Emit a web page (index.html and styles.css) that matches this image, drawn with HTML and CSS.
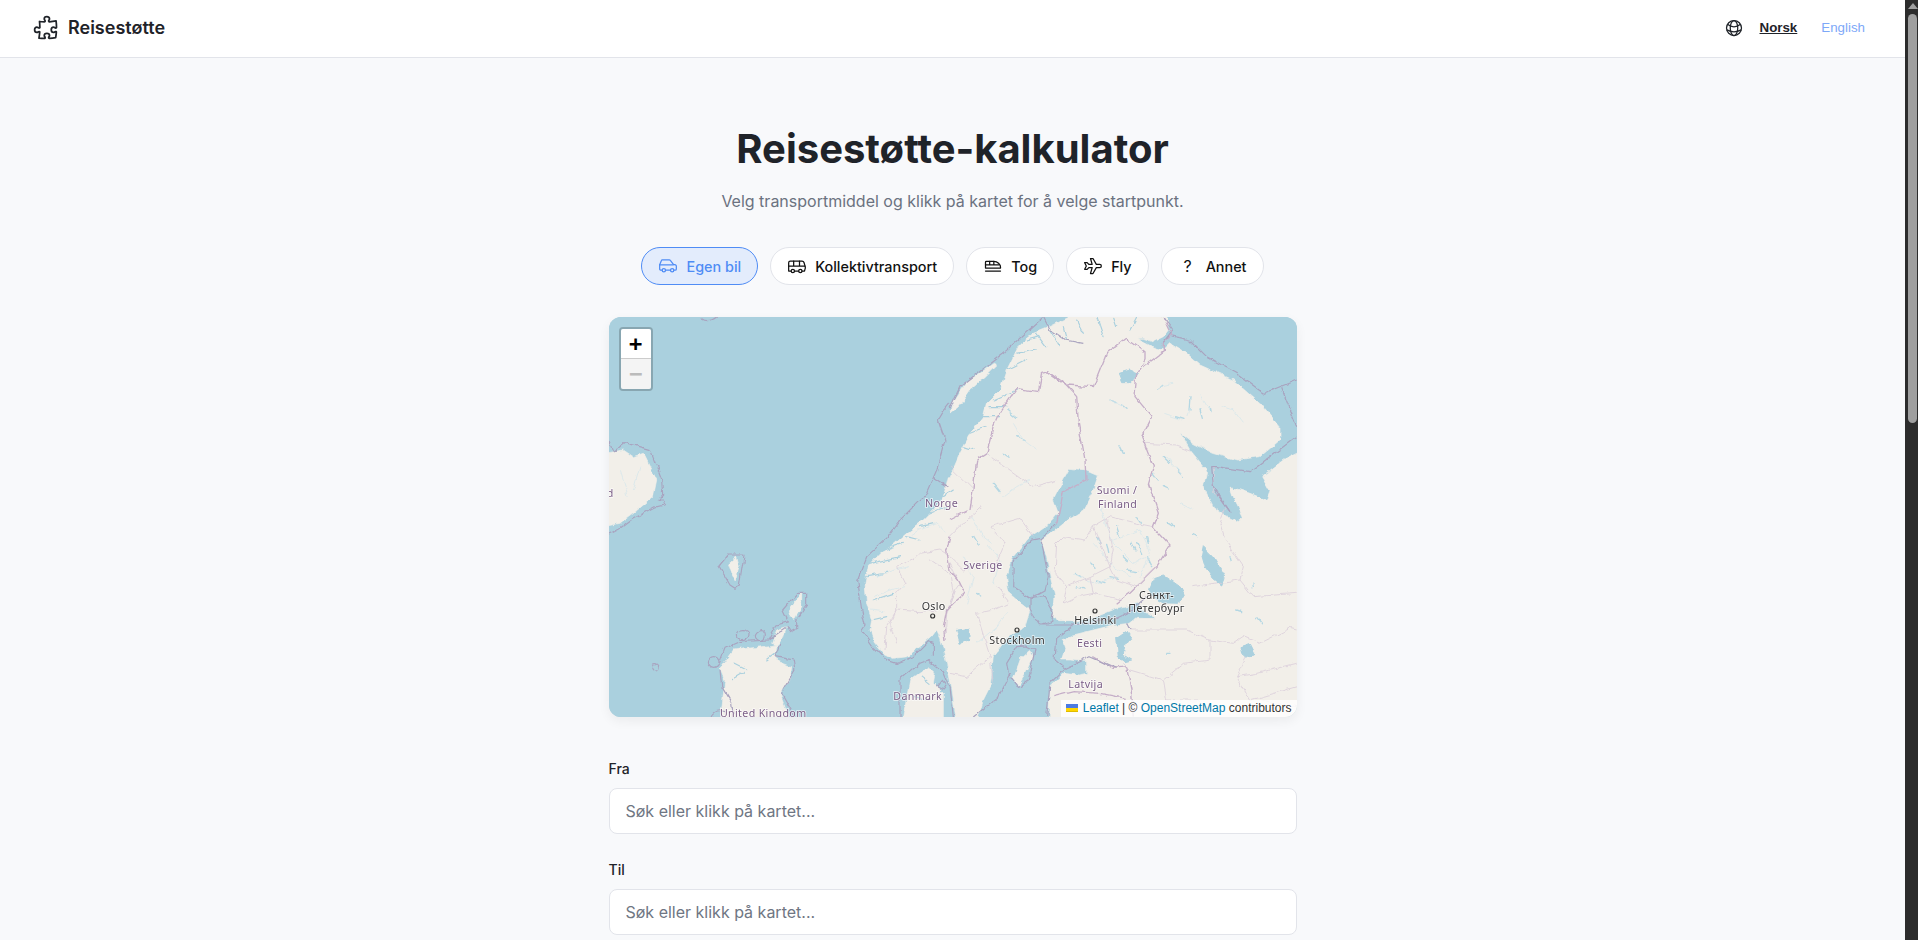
FILE: index.html
```html
<!DOCTYPE html>
<html lang="no">

<head>
    <meta charset="UTF-8">
    <title>Reisestøtte-kalkulator</title>

    <link rel="stylesheet" href="styles.css">
</head>

<body>
    <div class="window">
        <div class="page">
            <header class="topbar">
                <a class="brand" href="#">
                    <svg class="brand-icon" viewBox="0 0 24 24">
                        <path d="M14.25 6.087c0-.355.186-.676.401-.959.221-.29.349-.634.349-1.003 0-1.036-1.007-1.875-2.25-1.875s-2.25.84-2.25 1.875c0 .369.128.713.349 1.003.215.283.401.604.401.959v0a.64.64 0 01-.657.643 48.39 48.39 0 01-4.163-.3c.186 1.613.293 3.25.315 4.907a.656.656 0 01-.658.663v0c-.355 0-.676-.186-.959-.401a1.647 1.647 0 00-1.003-.349c-1.036 0-1.875 1.007-1.875 2.25s.84 2.25 1.875 2.25c.369 0 .713-.128 1.003-.349.283-.215.604-.401.959-.401v0c.31 0 .555.26.532.57a48.039 48.039 0 01-.642 5.056c1.518.19 3.058.309 4.616.354a.64.64 0 00.657-.643v0c0-.355-.186-.676-.401-.959a1.647 1.647 0 01-.349-1.003c0-1.035 1.008-1.875 2.25-1.875 1.243 0 2.25.84 2.25 1.875 0 .369-.128.713-.349 1.003-.215.283-.4.604-.4.959v0c0 .333.277.599.61.58a48.1 48.1 0 005.427-.63 48.05 48.05 0 00.582-4.717.532.532 0 00-.533-.57v0c-.355 0-.676.186-.959.401-.29.221-.634.349-1.003.349-1.035 0-1.875-1.007-1.875-2.25s.84-2.25 1.875-2.25c.37 0 .713.128 1.003.349.283.215.604.401.96.401v0a.656.656 0 00.658-.663 48.422 48.422 0 00-.37-5.36c-1.886.342-3.81.574-5.766.689a.578.578 0 01-.61-.58v0z" />
                    </svg>
                    <span>Reisestøtte</span>
                </a>
                <nav class="lang">
                    <svg class="lang-icon" viewBox="0 0 24 24">
                        <circle cx="12" cy="12" r="9" />
                        <ellipse cx="12" cy="12" rx="4.5" ry="9" />
                        <path d="M4.2 7.6c2.2 1.8 4.9 2.9 7.8 2.9s5.600-1.100 7.800-2.900M3.300 14.300c2.600 1.400 5.600 2.200 8.700 2.200s6.100-.8 8.700-2.200" />
                    </svg>
                    <button class="lang-btn lang-btn-active">Norsk</button>
                    <button class="lang-btn">English</button>
                </nav>
            </header>

            <main class="content">
                <h1>Reisestøtte-kalkulator</h1>
                <p class="lead">Velg transportmiddel og klikk på kartet for å velge startpunkt.</p>

                <div class="modes">
                    <button class="mode mode-active">
                        <svg class="mode-icon" viewBox="0 0 24 24">
                            <path d="M5 17H3.500C2.700 17 2 16.300 2 15.500V10.500L4 5.600C4.200 5 4.700 4.700 5.200 4.700H13.500c.5 0 1 .2 1.300.6L18.500 10l2.500.7c.6.2 1 .7 1 1.300v3.500c0 .8-.7 1.500-1.500 1.500H19" />
                            <circle cx="7" cy="17" r="2" />
                            <path d="M9 17h6M2 10.500h16.500" />
                            <circle cx="17" cy="17" r="2" />
                        </svg>
                        Egen bil
                    </button>
                    <button class="mode">
                        <svg class="mode-icon" viewBox="0 0 24 24">
                            <path d="M8 6v6M15 6v6M2 12h19.600" />
                            <path d="M18 18h3s.5-1.700.8-2.800c.1-.4.2-.8.2-1.200 0-.4-.1-.8-.2-1.200l-1.400-5C20.100 6.800 19.100 6 18 6H4a2 2 0 0 0-2 2v10h3" />
                            <circle cx="7" cy="18" r="2" />
                            <path d="M9 18h5" />
                            <circle cx="16" cy="18" r="2" />
                        </svg>
                        Kollektivtransport
                    </button>
                    <button class="mode">
                        <svg class="mode-icon" viewBox="0 0 24 24">
                            <path d="M3 14.500V7.500c0-.6.4-1 1-1h9c4.500 0 8 3.300 8 6.800v1.200z" />
                            <path d="M3 10.500h16.500M8 6.500v4M13 6.500v4M3 18h18" />
                        </svg>
                        Tog
                    </button>
                    <button class="mode">
                        <svg class="mode-icon" viewBox="0 0 24 24">
                            <path d="M16 10h4a2 2 0 0 1 0 4h-4l-4 7h-3l2-7h-4l-2 2h-3l2-4-2-4h3l2 2h4l-2-7h3z" />
                        </svg>
                        Fly
                    </button>
                    <button class="mode">
                        <span class="mode-icon mode-glyph">?</span>
                        Annet
                    </button>
                </div>

                <div class="map">
                    <svg class="map-art" viewBox="27 21 2064 1200">
                        <defs>
                            <!-- makes the hand-traced coasts and borders look less straight -->
                            <filter id="rough" x="0" y="0" width="100%" height="100%" color-interpolation-filters="sRGB">
                                <feTurbulence type="fractalNoise" baseFrequency="0.035" numOctaves="3" seed="7" />
                                <feDisplacementMap in="SourceGraphic" scale="16" xChannelSelector="R" yChannelSelector="G" />
                            </filter>
                        </defs>

                        <rect class="sea-bg" x="27" y="21" width="2064" height="1200" />

                        <g class="shapes">
                            <!-- land -->
                            <path class="land" d="M880 1045 850 1030 825 1000 810 960 815 930 800 880 795 820 805 770 840 730 880 705 920 670 960 640 1000 600 1030 560 1045 500 1050 500 1080 430 1110 370 1150 320 1160 280 1200 240 1220 180 1260 100 1300 70 1350 50 1390 30 1430 10 1700 10 1705 60 1690 80 1660 95 1630 85 1610 85 1640 100 1670 115 1690 120 1710 100 1760 130 1800 165 1900 210 1990 290 2040 350 2040 390 1980 440 1910 450 1840 430 1780 400 1740 368 1770 420 1820 480 1810 530 1840 590 1880 620 1910 635 1930 620 1900 560 1890 530 1950 550 2000 570 2010 545 1985 500 2050 450 2110 420 2110 1240 1345 1240 1350 1130 1390 1090 1435 1095 1460 1090 1460 1055 1410 1050 1385 1050 1395 1020 1385 990 1420 975 1480 960 1540 945 1590 940 1610 925 1670 925 1630 900 1610 880 1550 895 1490 920 1420 935 1370 935 1360 920 1365 860 1350 800 1340 740 1320 690 1355 670 1410 625 1450 600 1480 540 1495 495 1460 480 1410 475 1380 530 1360 570 1375 610 1350 640 1290 680 1240 740 1220 800 1225 845 1265 880 1290 900 1275 950 1220 985 1180 1040 1175 1090 1170 1130 1150 1170 1130 1240 1070 1240 1055 1130 1040 1060 1022 985 1010 960 995 980 960 1010 920 1040Z" />
                            <path class="land" d="M1052 310 1075 290 1110 240 1150 205 1190 165 1180 160 1140 190 1100 215 1060 275Z" />
                            <path class="land" d="M1240 1105 1262 1045 1290 1020 1300 1040 1275 1095 1255 1125Z" />
                            <path class="land" d="M10 430 70 420 100 440 130 430 150 470 170 510 160 560 100 610 60 640 10 650Z" />
                            <path class="land" d="M385 760 410 738 418 770 405 812 395 790Z" />
                            <path class="land" d="M565 900 590 862 605 850 605 890 585 925 570 920Z" />
                            <path class="land" d="M515 1000 530 960 560 950 550 985 530 1005Z" />
                            <path class="land" d="M360 1240 375 1110 360 1075 400 1020 530 1005 525 1050 575 1070 570 1110 540 1150 575 1240Z" />
                            <path class="land" d="M905 1240 930 1110 985 1070 1005 1090 1000 1120 1030 1150 1030 1240Z" />

                            <!-- fjords cut into the coast -->
                            <g class="fjord">
                                <path d="M800 800 860 790M810 760 900 740M820 870 880 850M815 930 860 920M850 720 910 700M920 680 960 690M960 650 1000 640M990 610 1040 590M1030 560 1060 540" />
                                <path d="M1180 270 1250 240M1170 290 1220 290M1150 320 1200 320M1110 370 1160 350M1090 410 1120 420M1220 180 1280 150M1250 130 1310 120M1280 90 1320 80M1310 70 1340 110M1350 60 1380 110M1390 50 1400 90M1430 30 1450 70M1490 21 1510 80M1610 21 1590 60M1540 21 1550 50" />
                                <path d="M400 1060 440 1080M395 1110 430 1090M540 1020 500 1050M965 1100 990 1120M940 1160 990 1170" />
                            </g>

                            <!-- lakes -->
                            <g class="lake" transform="translate(1050 0)">
                                <path d="M610 805 640 795 690 830 705 860 680 880 640 878 610 860 595 840Z" />
                                <path d="M760 710 790 740 825 800 815 825 790 805 765 770 755 735Z" />
                                <path d="M500 985 530 965 545 985 525 1000 520 1035 545 1050 525 1055 505 1040Z" />
                                <path d="M505 190 540 180 565 190 545 215 515 215Z" />
                                <path d="M870 1010 900 1000 915 1030 890 1045 875 1030Z" />
                                <path d="M20 960 60 955 55 990 30 1000Z" />
                            </g>
                            <g class="lakelet" transform="translate(1050 0)">
                                <path d="M440 680 450 700M500 650 510 680M560 700 575 730M530 780 560 785M590 680 595 700M420 760 435 775M380 790 395 800M480 800 505 805M560 620 575 640M640 440 660 460M680 480 700 500M510 410 520 430M480 270 495 278M515 285 528 295M620 240 640 225M680 320 705 328M750 300 757 325M780 290 783 305M720 260 717 300" />
                                <path d="M640 530 655 537M725 670 742 680M840 740 844 755M905 820 907 830M920 925 936 945M860 900 875 905M650 1030 660 1030M170 300 200 325M200 380 225 392M160 430 180 445M130 520 150 545M70 680 85 705M80 850 92 858M470 700 476 730M520 740 535 755M440 810 465 818M380 830 405 838M590 740 605 770M545 700 555 720M610 490 625 510M655 640 670 650" />
                            </g>

                            <!-- rivers -->
                            <g class="river">
                                <path d="M830 800 880 780 930 770M820 860 870 840 915 830M810 900 850 905M1040 670 1010 640 960 660 920 685M1090 740 1120 800 1100 880" />
                                <path d="M1130 1000 1190 950 1220 910M1160 700 1200 750 1180 820M1240 340 1270 390 1310 420M1210 560 1250 530 1290 510M1115 620 1150 680 1175 700" />
                                <path d="M1500 590 1540 700 1600 760 1640 740M1480 700 1540 770 1590 800M1420 790 1490 820 1550 800M1540 690 1620 660 1650 720 1620 800M1530 270 1570 290M1680 230 1720 220M1770 290 1760 320M1700 440 1750 500M1800 250 1830 300" />
                                <path d="M1690 310 1750 330M1860 290 1900 300 1930 340M120 470 100 540M60 480 85 560M1740 580 1780 600" />
                            </g>

                            <!-- land borders -->
                            <g class="border" transform="translate(1050 0)">
                                <path class="border-main" d="M0 630 60 600 70 530 80 450 110 430 130 350 150 305 200 235 265 245 275 190 295 185 350 225 430 230 470 130 530 85 585 125 585 150 560 190 555 260 605 320 575 380 610 470 595 520 625 610 610 650 660 705 620 770 540 850 500 880" />
                                <path class="border-main" d="M640 21 665 75 640 100 640 125 580 170" />
                                <path class="border-main" d="M295 185 345 220 380 260 385 340 405 450 408 510 340 545 320 640" />
                                <path d="M0 760 30 820 15 840 0 880M0 470 60 530 70 540M110 430 250 530 320 510M125 650 210 625 250 680M125 650 165 700 130 780M175 880 130 900 80 910 120 1040 50 1100 0 1090M120 1040 130 1120M140 830 180 880" />
                                <path d="M320 700 340 680 405 690 430 650 480 620 560 640 610 650M320 700 315 790 350 830 420 800 480 770 430 650M480 770 500 810 560 830 620 770M350 830 340 880 380 860 430 850 520 870M420 800 430 850M470 630 490 720 480 770" />
                                <path d="M585 400 680 405 720 420M790 470 790 540 830 590 810 640 825 690 880 770 870 810 910 860 1040 850M730 830 790 820 870 810M540 960 660 960 710 960 780 990 850 1000 880 980 930 1000 1020 955 1040 960M780 990 780 1050 700 1060 640 1110 540 1080 520 1060M890 1040 860 1100 920 1090 1040 1060M860 1100 900 1170 1040 1130M640 1110 650 1170 740 1170 800 1210M1040 1190 930 1170" />
                                <path class="border-main" d="M430 1040 490 1075 530 1070 545 1150 550 1220M310 1160 370 1145 450 1150 530 1165" />
                            </g>
                            <path class="border" d="M1090 780 1050 740 1020 720 960 730 945 745 890 770 915 820 890 850 890 900 860 950 855 1020M1090 780 1120 770M985 745 1050 790 1060 850 1040 910 1035 990M1010 900 960 905 890 900 870 945 890 1000M1145 590 1090 640 1050 680" />
                            <path class="border border-main" d="M1050 680 1040 720 1050 780 1075 810 1095 850 1060 880 1040 900 1030 950 1035 990" />

                            <!-- sea borders -->
                            <g class="sea">
                                <path d="M27 396 40 425 75 398 150 418 185 510 188 555 175 570 190 570 195 585 175 590 165 590 100 625 60 655 27 672" />
                                <path d="M357 768 385 735 432 735 418 825 405 835 390 825Z" />
                                <path d="M548 900 590 850 620 850 620 885 590 930 590 955 570 965 562 950 505 990 510 980 530 945 565 935Z" />
                                <ellipse cx="428" cy="974" rx="19" ry="15" />
                                <circle cx="481" cy="977" r="15" />
                                <circle cx="341" cy="1056" r="16" />
                                <circle cx="166" cy="1072" r="11" />
                                <path d="M305 26Q325 40 350 21" />
                                <path d="M335 1221Q345 1195 375 1205M358 1060 375 1015 420 995 505 990M360 1080 365 1130 395 1180 400 1221M525 1040 580 1050 585 1080 545 1150 585 1221M540 1000 525 1040" />
                                <path d="M1035 390 1015 330 1030 305 1050 280M1035 390 1010 480 980 550 905 625 865 680 800 740 773 810 785 900 795 945 785 960 820 1010 860 1050 890 1060 940 1040 985 995 1000 1000 1000 1040" />
                                <path d="M1000 500 1045 530M900 1221 900 1110 960 1060 985 1050 1030 1085 1050 1130 1060 1221M1010 1130 1025 1110 1040 1125 1030 1140 1010 1130Z" />
                            </g>
                            <g class="sea" transform="translate(1050 0)">
                                <path d="M0 295 30 230 165 125 280 21M280 21 300 60 345 90 400 100" />
                                <path d="M640 21 670 60 640 100M665 78 720 90 770 140 860 190 940 250 1040 210M995 235 1040 350M1040 380 900 485 800 470 785 470 790 530 840 605" />
                                <path d="M840 605 800 550M320 640 275 685 245 690 190 755 188 830 240 865 285 840 295 800 272 685M240 865 240 900 270 945 370 945 500 925 540 905 590 860M240 865 285 860 310 905 305 935 275 945" />
                                <path d="M530 940 540 960M370 945 320 985 315 1050 345 1075 420 1040 500 1075M345 1075 300 1120 290 1221M200 1010 230 1008 255 1020 235 1110 205 1130 175 1090 170 1060ZM70 1221 145 1160 180 1090" />
                            </g>
                        </g>

                        <!-- labels -->
                        <text class="label country" x="975" y="590">Norge</text>
                        <text class="label country" x="41" y="561" text-anchor="end">Ísland</text>
                        <text class="label country" x="1090" y="778">Sverige</text>
                        <text class="label country" x="1490" y="553">Suomi /</text>
                        <text class="label country" x="1494" y="593">Finland</text>
                        <text class="label country" x="1431" y="1010">Eesti</text>
                        <text class="label country" x="1405" y="1133">Latvija</text>
                        <text class="label country" x="880" y="1170">Danmark</text>
                        <text class="label country" x="360" y="1221">United Kingdom</text>
                        <text class="label city" x="965" y="900">Oslo</text>
                        <text class="label city" x="1168" y="1001">Stockholm</text>
                        <text class="label city" x="1423" y="942">Helsinki</text>
                        <text class="label city" x="1617" y="866">Санкт-</text>
                        <text class="label city" x="1585" y="905">Петербург</text>
                        <g class="capital">
                            <circle cx="998" cy="918" r="6" />
                            <circle cx="1251" cy="960" r="6" />
                            <circle cx="1485" cy="903" r="6" />
                        </g>
                    </svg>

                    <div class="zoom">
                        <a class="zoom-btn" href="#">+</a>
                        <a class="zoom-btn zoom-btn-off" href="#">−</a>
                    </div>

                    <div class="attribution">
                        <svg class="flag" viewBox="0 0 12 8">
                            <path fill="#4C7BE1" d="M0 0h12v4H0z" />
                            <path fill="#FFD500" d="M0 4h12v3H0z" />
                            <path fill="#E0BC00" d="M0 7h12v1H0z" />
                        </svg>
                        <a href="#">Leaflet</a> | © <a href="#">OpenStreetMap</a> contributors
                    </div>
                </div>

                <div class="field">
                    <label for="from">Fra</label>
                    <input id="from" type="text" placeholder="Søk eller klikk på kartet...">
                </div>
                <div class="field">
                    <label for="to">Til</label>
                    <input id="to" type="text" placeholder="Søk eller klikk på kartet...">
                </div>
            </main>
        </div>

        <div class="scrollbar">
            <div class="scroll-arrow"></div>
            <div class="scroll-thumb"></div>
        </div>
    </div>
</body>

</html>
```

FILE: styles.css
```css
* {
    box-sizing: border-box;
}

html,
body {
    margin: 0;
    height: 100%;
    overflow: hidden;
}

body {
    background-color: #f8f9fb;
    color: #1f2937;
    font-family: 'Inter', 'Liberation Sans', sans-serif;
}

.window {
    display: flex;
    height: 940px;
}

.page {
    flex: 1;
    min-width: 0;
    overflow: hidden;
}

/* top bar */
.topbar {
    display: flex;
    align-items: center;
    justify-content: space-between;
    height: 58px;
    padding: 0 40px 2px 32px;
    background-color: #fff;
    border-bottom: 1px solid #e2e4ea;
}

.brand {
    display: flex;
    align-items: center;
    gap: 8px;
    color: #1f2329;
    font-size: 18px;
    font-weight: 600;
    text-decoration: none;
}

.brand-icon {
    width: 28px;
    height: 28px;
    fill: none;
    stroke: #1f2329;
    stroke-width: 1.5;
    stroke-linejoin: round;
}

.lang {
    display: flex;
    align-items: center;
}

.lang-icon {
    width: 20px;
    height: 20px;
    margin-right: 16px;
    fill: none;
    stroke: #1f2329;
    stroke-width: 1.5;
}

.lang-btn {
    padding: 0;
    margin-right: 24px;
    background: none;
    border: none;
    color: #7da8f8;
    font-family: 'Liberation Sans', sans-serif;
    font-size: 13.33px;
}

.lang-btn:last-child {
    margin-right: 0;
}

.lang-btn-active {
    color: #1f2329;
    font-weight: 700;
    text-decoration: underline;
}

/* main column */
.content {
    width: 688px;
    margin: 0 auto;
}

h1 {
    margin: 0;
    padding-top: 67px;
    font-size: 40px;
    font-weight: 700;
    line-height: 48px;
    text-align: center;
    color: #1f2329;
}

.lead {
    margin: 16px 0 0;
    font-size: 16px;
    line-height: 24px;
    text-align: center;
    color: #6b7280;
}

.modes {
    display: flex;
    justify-content: center;
    gap: 12px;
    margin: 34px -20px 0;
}

.mode {
    display: flex;
    align-items: center;
    gap: 8px;
    height: 38px;
    padding: 0 16px;
    background-color: #fff;
    border: 1px solid #e2e4ea;
    border-radius: 19px;
    color: #111;
    font-family: inherit;
    font-size: 14.4px;
    font-weight: 500;
}

.mode-active {
    background-color: #e3ecfc;
    border-color: #4f8cf5;
    color: #4f8cf5;
}

.mode-icon {
    flex: none;
    width: 20px;
    height: 20px;
    fill: none;
    stroke: currentColor;
    stroke-width: 1.5;
    stroke-linecap: round;
    stroke-linejoin: round;
}

.mode-glyph {
    font-size: 16px;
    font-weight: 400;
    line-height: 20px;
    text-align: center;
}

/* map */
.map {
    position: relative;
    height: 400px;
    margin-top: 32px;
    background-color: #aad0de;
    border-radius: 12px;
    box-shadow: 0 4px 12px rgba(0, 0, 0, 0.06);
    overflow: hidden;
}

.map-art {
    display: block;
    width: 100%;
    height: 100%;
    filter: blur(0.3px);
}

.sea-bg {
    fill: #aad0de;
}

.shapes {
    filter: url(#rough);
}

.land {
    fill: #f2efe9;
    stroke: #f2efe9;
    stroke-width: 2;
    stroke-linejoin: round;
}

.lake path {
    fill: #aad0de;
    stroke: #aad0de;
    stroke-width: 3;
    stroke-linejoin: round;
}

.fjord path {
    fill: none;
    stroke: #aad0de;
    stroke-width: 3.5;
    stroke-linecap: round;
}

.lakelet path {
    fill: none;
    stroke: #b4d7e3;
    stroke-width: 4;
    stroke-linecap: round;
}

.river path {
    fill: none;
    stroke: #d2e5eb;
    stroke-width: 2;
    stroke-linejoin: round;
}

.border,
.border path {
    fill: none;
    stroke: #dbcfdb;
    stroke-width: 2.5;
    stroke-linejoin: round;
}

.border .border-main,
.border.border-main {
    stroke: #c5aec8;
    stroke-width: 4;
}

.sea path,
.sea ellipse,
.sea circle {
    fill: none;
    stroke: #a9a3bf;
    stroke-width: 3.5;
    stroke-linejoin: round;
}

.label {
    font-family: 'Noto Sans', sans-serif;
    font-size: 32px;
    letter-spacing: 1px;
    paint-order: stroke;
    stroke: rgba(255, 255, 255, 0.7);
    stroke-width: 5;
}

.country {
    fill: #7a5d86;
}

.city {
    fill: #333;
}

.capital circle {
    fill: #f2efe9;
    stroke: #333;
    stroke-width: 3.5;
}

.zoom {
    position: absolute;
    top: 10px;
    left: 10px;
    display: flex;
    flex-direction: column;
    border: 2px solid rgba(0, 0, 0, 0.2);
    border-radius: 4px;
    background-clip: padding-box;
}

.zoom-btn {
    display: block;
    width: 30px;
    height: 30px;
    background-color: #fff;
    border-bottom: 1px solid #ccc;
    border-radius: 2px 2px 0 0;
    color: #000;
    font-family: 'DejaVu Sans Mono', 'Liberation Mono', monospace;
    font-size: 22px;
    font-weight: 700;
    line-height: 30px;
    text-align: center;
    text-decoration: none;
}

.zoom-btn-off {
    background-color: #f4f4f4;
    border-bottom: none;
    border-radius: 0 0 2px 2px;
    color: #bbb;
}

.attribution {
    position: absolute;
    right: 0;
    bottom: 0;
    padding: 0 5px;
    background-color: rgba(255, 255, 255, 0.8);
    color: #333;
    font-family: 'Liberation Sans', sans-serif;
    font-size: 12px;
    line-height: 17px;
}

.attribution a {
    color: #0078a8;
    text-decoration: none;
}

.flag {
    width: 12px;
    height: 8px;
    margin-right: 1px;
}

/* route fields */
.field {
    margin-top: 26px;
}

.map + .field {
    margin-top: 42px;
}

.field label {
    display: block;
    margin-bottom: 9px;
    font-size: 14px;
    font-weight: 500;
    line-height: 20px;
    color: #1f2329;
}

.field input {
    display: block;
    width: 100%;
    height: 46px;
    padding: 0 16px;
    background-color: #fff;
    border: 1px solid #e2e4ea;
    border-radius: 8px;
    color: #1f2329;
    font-family: inherit;
    font-size: 16px;
}

.field input::placeholder {
    color: #6f7683;
    opacity: 1;
}

/* page scrollbar as the browser drew it */
.scrollbar {
    flex: none;
    display: flex;
    flex-direction: column;
    align-items: center;
    width: 13px;
    padding-left: 2px;
    background-color: #2c2c2c;
}

.scroll-arrow {
    width: 0;
    height: 0;
    margin-top: 3px;
    border-left: 5px solid transparent;
    border-right: 5px solid transparent;
    border-bottom: 6px solid #a0a0a0;
}

.scroll-thumb {
    width: 9px;
    height: 409px;
    margin-top: 5px;
    background-color: #9f9f9f;
    border-radius: 5px;
}
```
